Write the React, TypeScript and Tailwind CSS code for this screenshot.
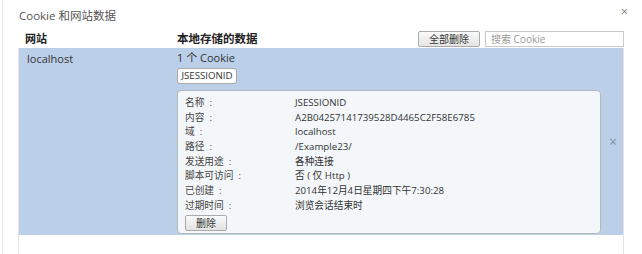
import React from "react";

const rows: [string, string][] = [
  ["名称", "JSESSIONID"],
  ["内容", "A2B04257141739528D4465C2F58E6785"],
  ["域", "localhost"],
  ["路径", "/Example23/"],
  ["发送用途", "各种连接"],
  ["脚本可访问", "否 ( 仅 Http )"],
  ["已创建", "2014年12月4日星期四下午7:30:28"],
  ["过期时间", "浏览会话结束时"],
];

export default function App() {
  return (
    <div
      className="w-[642px] h-[254px] bg-white relative overflow-hidden text-[11px] text-[#333]"
      style={{ fontFamily: '"Open Sans", "Noto Sans CJK SC", sans-serif' }}
    >
      <div className="absolute left-[2px] top-0 bottom-0 w-[1px] bg-[#e6e6e6]" />
      <div className="absolute left-[621px] top-[6px] text-[12px] text-[#777] leading-none">×</div>
      <div className="pl-[19px] pt-[7px] text-[11.5px] text-[#555] h-[30px]">Cookie 和网站数据</div>
      <div className="ml-[19px] w-[605px] flex items-center h-[18px]">
        <div className="w-[158px] pl-[6px] font-bold text-[#222]">网站</div>
        <div className="flex-1 font-bold text-[#222] text-[11.5px]">本地存储的数据</div>
        <button className="h-[16px] w-[62px] border border-[#aaa] rounded-[2px] bg-gradient-to-b from-[#fafafa] to-[#e4e4e4] text-[10px] text-[#333] leading-none mr-[5px]">
          全部删除
        </button>
        <div className="h-[16px] w-[139px] border border-[#c8c8c8] bg-white text-[10px] text-[#999] pl-[5px] leading-[14px]">
          搜索 Cookie
        </div>
      </div>
      <div className="ml-[18px] w-[606px] h-[206px] border-l border-r border-[#e4e4e4]">
        <div className="bg-[#bbcfe9] h-[187px] flex pt-[3px]">
          <div className="w-[158px] pl-[8px]">localhost</div>
          <div className="flex-1 flex flex-col pr-[22px]">
            <div className="h-[13px] leading-[13px]">1 个 Cookie</div>
            <div className="mt-[4px] h-[16px] w-[60px] border border-[#aaa] rounded-[3px] bg-white text-[9.7px] flex items-center justify-center">
              JSESSIONID
            </div>
            <div className="mt-[6px] h-[144px] w-[424px] border border-[#b0b8c0] rounded-[4px] bg-[#f4f7f9] pl-[7px] pt-[5px]">
              {rows.map(([k, v]) => (
                <div key={k} className="flex h-[14.7px] leading-[14.7px] text-[9.7px]">
                  <div className="w-[110px] text-[#444]">
                    {k}
                    <span className="ml-[5px]">:</span>
                  </div>
                  <div className="text-[#333]">{v}</div>
                </div>
              ))}
              <button className="mt-[1px] h-[16px] w-[42px] border border-[#aaa] rounded-[2px] bg-gradient-to-b from-[#fafafa] to-[#e2e2e2] text-[10px] leading-none">
                删除
              </button>
            </div>
          </div>
          <div className="absolute left-[609px] top-[135px] text-[14px] text-[#8090a0] leading-none">×</div>
        </div>
      </div>
    </div>
  );
}
